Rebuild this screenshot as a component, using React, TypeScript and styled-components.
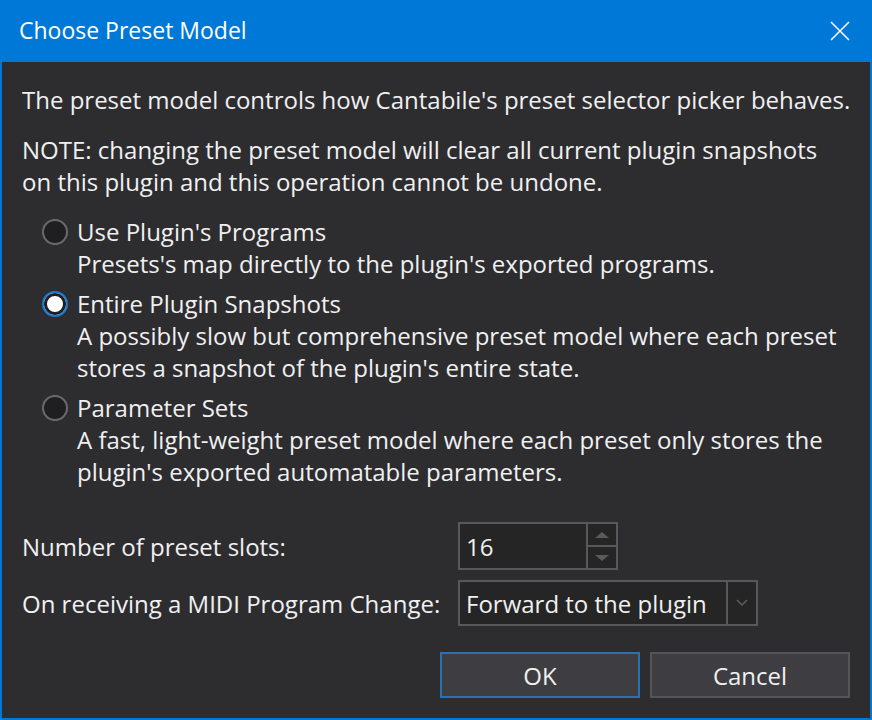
import styled, { createGlobalStyle } from 'styled-components';

const GlobalStyle = createGlobalStyle`
  html, body {
    margin: 0;
    padding: 0;
    background: #2d2d30;
  }
  * {
    box-sizing: border-box;
  }
`;

interface IPresetOption {
  title: string;
  lines: string[];
  checked?: boolean;
}

const options: IPresetOption[] = [
  {
    title: "Use Plugin's Programs",
    lines: ["Presets's map directly to the plugin's exported programs."],
  },
  {
    title: 'Entire Plugin Snapshots',
    lines: [
      'A possibly slow but comprehensive preset model where each preset',
      "stores a snapshot of the plugin's entire state.",
    ],
    checked: true,
  },
  {
    title: 'Parameter Sets',
    lines: [
      'A fast, light-weight preset model where each preset only stores the',
      "plugin's exported automatable parameters.",
    ],
  },
];

export default function App() {
  return (
    <>
      <GlobalStyle />
      <Dialog>
        <TitleBar>
          <Title>Choose Preset Model</Title>
          <CloseButton aria-label="Close">
            <svg width="20" height="20" viewBox="0 0 20 20">
              <path d="M1 1 L19 19 M19 1 L1 19" stroke="#fff" strokeWidth="1.6" fill="none" />
            </svg>
          </CloseButton>
        </TitleBar>

        <Body>
          <Para>
            <Line>The preset model controls how Cantabile's preset selector picker behaves.</Line>
          </Para>
          <Para>
            <Line>NOTE: changing the preset model will clear all current plugin snapshots</Line>
            <Line>on this plugin and this operation cannot be undone.</Line>
          </Para>

          <Options>
            {options.map((opt) => (
              <Option key={opt.title}>
                <Radio $checked={opt.checked} />
                <OptionText>
                  <Line>{opt.title}</Line>
                  {opt.lines.map((l) => (
                    <Line key={l}>{l}</Line>
                  ))}
                </OptionText>
              </Option>
            ))}
          </Options>

          <Form>
            <Label>Number of preset slots:</Label>
            <SpinBox>
              <SpinValue>16</SpinValue>
              <SpinButtons>
                <SpinButton>
                  <Arrow $up />
                </SpinButton>
                <SpinButton>
                  <Arrow />
                </SpinButton>
              </SpinButtons>
            </SpinBox>

            <Label>On receiving a MIDI Program Change:</Label>
            <Combo>
              <ComboValue>Forward to the plugin</ComboValue>
              <ComboDrop>
                <svg width="12" height="8" viewBox="0 0 12 8">
                  <path d="M1 1 L6 6 L11 1" stroke="#5e5e60" strokeWidth="1.5" fill="none" />
                </svg>
              </ComboDrop>
            </Combo>
          </Form>

          <Buttons>
            <Button $primary>OK</Button>
            <Button>Cancel</Button>
          </Buttons>
        </Body>
      </Dialog>
    </>
  );
}

const Dialog = styled.div`
  width: 872px;
  height: 720px;
  display: flex;
  flex-direction: column;
  overflow: hidden;
  border: 2px solid #0078d7;
  border-top: none;
  background: #2d2d30;
  color: #f0f0f0;
  font-family: 'Open Sans', 'Noto Sans', sans-serif;
  font-size: 24px;
`;

const TitleBar = styled.div`
  flex: none;
  height: 62px;
  margin: 0 -2px;
  padding: 0 22px 0 19px;
  display: flex;
  align-items: center;
  justify-content: space-between;
  background: #0078d7;
`;

const Title = styled.div`
  font-size: 23px;
  color: #ffffff;
  padding-bottom: 2px;
`;

const CloseButton = styled.div`
  width: 20px;
  height: 20px;
  display: flex;
`;

const Body = styled.div`
  flex: 1;
  padding: 22px 20px 0 20px;
  display: flex;
  flex-direction: column;
`;

const Para = styled.div`
  line-height: 32px;
  margin-bottom: 18px;
`;

const Line = styled.div`
  white-space: nowrap;
`;

const Options = styled.div`
  display: flex;
  flex-direction: column;
  gap: 8px;
  padding-left: 20px;
`;

const Option = styled.div`
  display: flex;
  align-items: flex-start;
  gap: 9px;
  line-height: 32px;
`;

const Radio = styled.span<{ $checked?: boolean }>`
  flex: none;
  width: 26px;
  height: 26px;
  margin-top: 3px;
  border-radius: 50%;
  border: 2px solid ${(p) => (p.$checked ? '#1a7ad4' : '#6a6a6c')};
  background: ${(p) => (p.$checked ? '#ffffff' : '#1f1f21')};
  box-shadow: inset 0 0 0 3px ${(p) => (p.$checked ? '#1f1f21' : 'transparent')};
`;

const OptionText = styled.div`
  display: flex;
  flex-direction: column;
`;

const Form = styled.div`
  margin-top: 34px;
  display: grid;
  grid-template-columns: 436px auto;
  row-gap: 10px;
  align-items: center;
  justify-items: start;
`;

const Label = styled.div``;

const SpinBox = styled.div`
  width: 160px;
  height: 48px;
  display: flex;
  border: 2px solid #58585a;
  background: #252526;
`;

const SpinValue = styled.div`
  flex: 1;
  padding-left: 6px;
  display: flex;
  align-items: center;
`;

const SpinButtons = styled.div`
  width: 30px;
  display: flex;
  flex-direction: column;
  border-left: 2px solid #58585a;
`;

const SpinButton = styled.div`
  flex: 1;
  display: flex;
  align-items: center;
  justify-content: center;
  & + & {
    border-top: 2px solid #58585a;
  }
`;

const Arrow = styled.span<{ $up?: boolean }>`
  width: 0;
  height: 0;
  border-left: 7px solid transparent;
  border-right: 7px solid transparent;
  ${(p) => (p.$up ? 'border-bottom: 6px solid #5a5a5c;' : 'border-top: 6px solid #5a5a5c;')}
`;

const Combo = styled.div`
  width: 300px;
  height: 46px;
  display: flex;
  border: 2px solid #58585a;
  background: #252526;
`;

const ComboValue = styled.div`
  flex: 1;
  padding-left: 6px;
  display: flex;
  align-items: center;
`;

const ComboDrop = styled.div`
  width: 30px;
  border-left: 2px solid #58585a;
  display: flex;
  align-items: center;
  justify-content: center;
`;

const Buttons = styled.div`
  margin-top: 26px;
  display: flex;
  justify-content: flex-end;
  gap: 10px;
`;

const Button = styled.div<{ $primary?: boolean }>`
  width: 200px;
  height: 46px;
  display: flex;
  align-items: center;
  justify-content: center;
  background: #3e3e42;
  border: 2px solid ${(p) => (p.$primary ? '#2a70b3' : '#555557')};
  color: #f0f0f0;
`;
